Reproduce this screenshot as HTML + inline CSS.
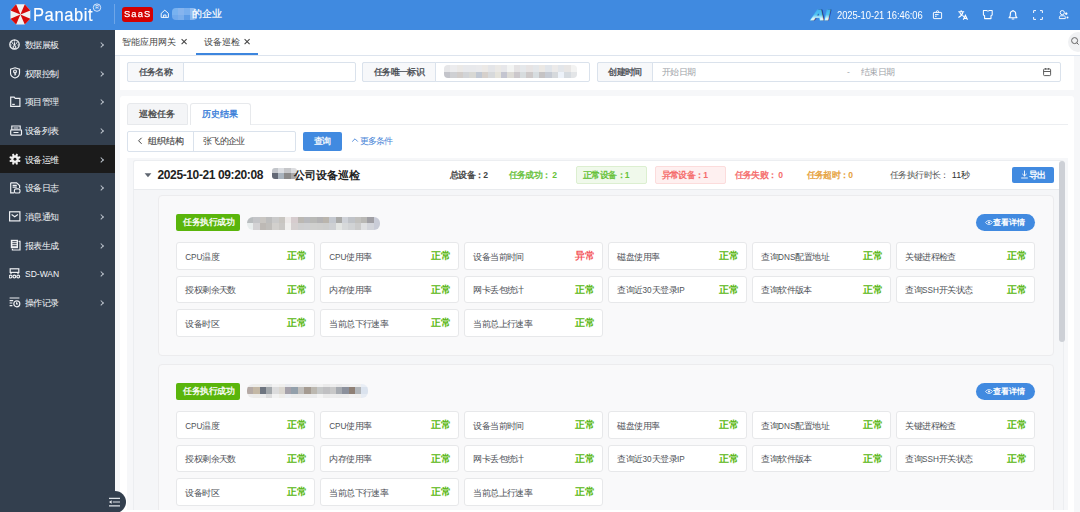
<!DOCTYPE html><html><head><meta charset="utf-8"><style>
*{box-sizing:border-box;margin:0;padding:0}
html,body{width:1080px;height:512px;overflow:hidden;background:#fff;font-family:"Liberation Sans",sans-serif;color:#333}
.a{position:absolute}
.t{position:absolute;white-space:nowrap}
.mi{position:absolute;left:0;width:115px;height:28.7px;color:#f4f6f8;font-size:9px;letter-spacing:-0.75px;font-weight:400;line-height:28.7px}
.mi .tx{position:absolute;left:25px;top:0.9px}
.mi .ch{position:absolute;left:98.5px;top:12.9px;width:4.2px;height:4.2px;border-right:0.9px solid #b9c0c9;border-top:0.9px solid #b9c0c9;transform:rotate(45deg)}
.mi.act{background:#1b1b1b}
.mi svg{position:absolute}
.lbl{position:absolute;background:#f7f8fa;border:1px solid #dae2ec;border-radius:2px 0 0 2px;font-size:9px;letter-spacing:-0.6px;font-weight:400;-webkit-text-stroke-width:0.3px;color:#43474e;text-align:center;line-height:18px}
.inp{position:absolute;background:#fff;border:1px solid #dae2ec;border-radius:2px}
.cell{position:absolute;width:138.8px;height:27.8px;background:#fff;border:1px solid #e7e8ea;border-radius:3px}
.cell .n{position:absolute;left:8px;top:0.6px;line-height:26px;font-size:9px;letter-spacing:-0.55px;color:#4f5359}
.cell .s{position:absolute;right:7.2px;top:0;line-height:25.5px;font-size:9.8px;font-weight:bold;color:#56b60c}
.cell .s.bad{color:#f4585d}
.badge{position:absolute;height:17.5px;background:#5ab50b;color:#fff;font-size:9px;letter-spacing:-0.5px;-webkit-text-stroke-width:0.3px;line-height:17.5px;padding:0 6px 0 7px;border-radius:2px}
.det{position:absolute;width:58.8px;height:16.7px;background:#418ae0;border-radius:9px;color:#fff;font-size:8.4px;font-weight:bold;line-height:16.7px}
</style></head><body>
<div class="a" style="left:0;top:0;width:1080px;height:30px;background:#408ae0"></div>
<svg class="a" style="left:0;top:0" width="34" height="30"><g transform="translate(20.4,14.45)">
<polygon points="-4.3,-10.15 4.4,-10.15 9.9,-4.05 9.9,4.35 4.4,10.15 -4.3,10.15 -9.9,4.35 -9.9,-4.05" fill="#f1f1f1"/>
<polygon points="0,0 -4.3,-10.15 -9.9,-4.05" fill="#d60a0a"/>
<polygon points="0,0 4.4,-10.15 9.9,-4.05" fill="#d60a0a"/>
<polygon points="0,0 9.9,4.35 4.4,10.15" fill="#d60a0a"/>
<polygon points="0,0 -9.9,4.35 -4.3,10.15" fill="#d60a0a"/></g></svg>
<div class="t" style="left:32.5px;top:4px;font-size:18.6px;color:#fff;line-height:22px;letter-spacing:0.65px;transform:scaleX(0.89);-webkit-text-stroke-width:0.15px;transform-origin:0 0">Panabit</div>
<svg class="a" style="left:92px;top:3px" width="10" height="10"><circle cx="5" cy="4.6" r="3.7" fill="none" stroke="#eaf2ff" stroke-width="0.9"/><text x="5" y="6.3" font-size="4.8" fill="#fff" text-anchor="middle" font-family="Liberation Sans">R</text></svg>
<div class="a" style="left:114px;top:4px;width:1px;height:20px;background:#6ea6e8"></div>
<div class="t" style="left:122px;top:7px;width:31px;height:15px;background:#d40000;border-radius:3px"></div>
<div class="t" style="left:124.2px;top:6.3px;color:#fff;font-size:18.6px;line-height:30px;letter-spacing:2.3px;-webkit-text-stroke-width:0.5px;transform:scale(0.5);transform-origin:0 0">SaaS</div>
<svg class="a" style="left:159px;top:8px" width="12" height="12"><path d="M2.2,5.4 L5.8,2.2 L9.4,5.4 L9.4,9.4 L2.2,9.4 Z" fill="none" stroke="#fff" stroke-width="0.95"/><path d="M4.6,9.4 V7 H7 V9.4" fill="none" stroke="#fff" stroke-width="0.9"/></svg>
<div class="a" style="left:172.2px;top:8.3px;width:24.40px;height:11.90px;overflow:hidden;border-radius:4px;filter:blur(0.7px);"><div style="position:absolute;left:0.00px;top:0.00px;width:6.50px;height:7.10px;background:#78b2f0"></div><div style="position:absolute;left:6.10px;top:0.00px;width:6.50px;height:7.10px;background:#86b4ee"></div><div style="position:absolute;left:12.20px;top:0.00px;width:6.50px;height:7.10px;background:#79afee"></div><div style="position:absolute;left:18.30px;top:0.00px;width:6.50px;height:7.10px;background:#92bcf0"></div><div style="position:absolute;left:0.00px;top:6.70px;width:6.50px;height:5.60px;background:#70a9ec"></div><div style="position:absolute;left:6.10px;top:6.70px;width:6.50px;height:5.60px;background:#7aaeec"></div><div style="position:absolute;left:12.20px;top:6.70px;width:6.50px;height:5.60px;background:#5c9be6"></div><div style="position:absolute;left:18.30px;top:6.70px;width:6.50px;height:5.60px;background:#88b7ef"></div></div>
<div class="t" style="left:192px;top:7px;font-size:10px;line-height:14px;color:#fff;-webkit-text-stroke-width:0.2px">的企业</div>
<svg class="a" style="left:808px;top:5px" width="26" height="17"><defs><linearGradient id="aig" x1="0" y1="0" x2="0" y2="1"><stop offset="0" stop-color="#35a6ee"/><stop offset="0.5" stop-color="#52c4f4"/><stop offset="0.75" stop-color="#e8fbff"/><stop offset="1" stop-color="#7fd6f6"/></linearGradient></defs><g transform="translate(3.3,14.6) scale(1.2,1)"><text x="0.7" y="0.6" font-family="Liberation Sans" font-weight="bold" font-style="italic" font-size="15" fill="#1c2f6a" stroke="#1c2f6a" stroke-width="0.9" letter-spacing="0.4">AI</text><text x="0" y="0" font-family="Liberation Sans" font-weight="bold" font-style="italic" font-size="15" fill="url(#aig)" stroke="url(#aig)" stroke-width="0.9" letter-spacing="0.4">AI</text></g></svg>
<div class="t" style="left:836.8px;top:9.1px;font-size:10.4px;line-height:14px;color:#fff;letter-spacing:-0.1px;transform:scaleX(0.905);transform-origin:0 0">2025-10-21 16:46:06</div>
<svg class="a" style="left:930px;top:8px" width="14" height="14"><rect x="3.4" y="4.4" width="8.2" height="6.2" rx="0.6" stroke="#fff" fill="none" stroke-width="0.95"/><path d="M6.4,4.4 V3.2 Q7.5,2.2 8.6,3.2 V4.4" stroke="#fff" fill="none" stroke-width="0.95"/><path d="M5,6.6 H8.6 M5,8.3 H6.6" stroke="#fff" fill="none" stroke-width="0.95"/></svg>
<svg class="a" style="left:956px;top:8px" width="14" height="14"><path d="M2.3,3.7 H8.2 M5.2,2.2 V3.7 M3.6,4.4 C4.4,6.6 5.8,7.8 8.2,8.6 M6.9,4.4 C6.2,7 4.6,8.4 2.4,9.4" stroke="#fff" fill="none" stroke-width="1.15"/><path d="M7.3,11.8 L9.4,7.3 L11.5,11.8 M8.2,10.3 H10.6" stroke="#fff" fill="none" stroke-width="1.15"/></svg>
<svg class="a" style="left:981px;top:8px" width="14" height="14"><path d="M2.4,2.4 H5.6 C6,3.3 7.9,3.3 8.3,2.4 H11.2 V7 L10,7.6 V10.6 H3.6 V7.6 L2.4,7 Z" stroke="#fff" fill="none" stroke-width="1.05" stroke-linejoin="round"/></svg>
<svg class="a" style="left:1006px;top:8px" width="14" height="14"><path d="M3.1,9.7 C3.9,9 4.3,8.4 4.3,7.2 V6 C4.3,4.2 5.4,3 7,3 C8.6,3 9.7,4.2 9.7,6 V7.2 C9.7,8.4 10.1,9 10.9,9.7 Z" stroke="#fff" fill="none" stroke-width="1.15" stroke-linejoin="round"/><path d="M5.7,11 H8.3 M7,2.1 V3" stroke="#fff" stroke-width="1.2"/></svg>
<svg class="a" style="left:1031px;top:8px" width="14" height="14"><path d="M2.6,5 V2.6 H5 M9,2.6 H11.4 V5 M11.4,9 V11.4 H9 M5,11.4 H2.6 V9" stroke="#fff" fill="none" stroke-width="0.95"/></svg>
<svg class="a" style="left:1057px;top:8px" width="14" height="14"><circle cx="5.3" cy="4.6" r="2.1" stroke="#fff" fill="none" stroke-width="0.95"/><path d="M2.4,10.6 V9.3 C2.4,8.3 3,7.8 4,7.8 H6.8 C7.8,7.8 8.3,8.3 8.3,9.3 V10.6 Z" stroke="#fff" fill="none" stroke-width="0.95"/><path d="M9.2,4.3 L10.4,5 V6.3 L9.2,7 L8.1,6.3 V5 Z" fill="#fff"/><circle cx="10.5" cy="9.4" r="1" fill="#fff"/></svg>
<div class="a" style="left:0;top:30px;width:115px;height:482px;background:#333f4e"></div>
<div class="mi" style="top:30.00px"><span class="tx">数据展板</span><i class="ch"></i></div>
<svg class="a" style="left:9px;top:38.7px" width="13" height="13"><circle cx="5.5" cy="5.5" r="4.7" fill="none" stroke="#eef0f3" stroke-width="1.3"/><path d="M5.5,1.2 V2.6 M2.4,2.6 L3.4,3.6 M8.6,2.6 L7.6,3.6 M1.2,6 H2.6 M9.8,6 H8.4 M5.5,3.2 V6.8" stroke="#eef0f3" stroke-width="1.2"/><path d="M3.2,4.2 L4.6,5.4 M7.8,4.2 L6.4,5.4" stroke="#eef0f3" stroke-width="1"/><circle cx="5.5" cy="8.1" r="1.4" fill="#333f4e" stroke="#eef0f3" stroke-width="1.1"/></svg>
<div class="mi" style="top:58.70px"><span class="tx">权限控制</span><i class="ch"></i></div>
<svg class="a" style="left:10px;top:66.6px" width="13" height="13"><path d="M5,0.8 L9.5,2.2 V6 C9.5,8.6 7.6,10.2 5,11 C2.4,10.2 0.5,8.6 0.5,6 V2.2 Z" stroke="#eef0f3" fill="none" stroke-width="1.2"/><circle cx="5" cy="4.4" r="1.4" stroke="#eef0f3" fill="none" stroke-width="1.2"/><path d="M5,5.8 V8.4 M5,7.2 H6.2" stroke="#eef0f3" fill="none" stroke-width="1.2"/></svg>
<div class="mi" style="top:87.40px"><span class="tx">项目管理</span><i class="ch"></i></div>
<svg class="a" style="left:9.5px;top:96px" width="13" height="13"><path d="M0.7,1.2 H4.2 L5.2,2.3 H9.9 V10.3 H0.7 Z" stroke="#eef0f3" fill="none" stroke-width="1.2"/><path d="M2.2,8.4 H4.8" stroke="#eef0f3" fill="none" stroke-width="1.2"/></svg>
<div class="mi" style="top:116.10px"><span class="tx">设备列表</span><i class="ch"></i></div>
<svg class="a" style="left:9.5px;top:124.5px" width="13" height="13"><path d="M1.8,4.8 V1 H10.2 V4" stroke="#eef0f3" fill="none" stroke-width="1.2"/><rect x="0.7" y="4.9" width="10.8" height="5.2" rx="0.8" stroke="#eef0f3" fill="none" stroke-width="1.2"/><path d="M3.5,7.5 H8.5 M3.6,3 H8.4" stroke="#eef0f3" fill="none" stroke-width="1.2"/></svg>
<div class="mi act" style="top:144.80px"><span class="tx">设备运维</span><i class="ch"></i></div>
<svg class="a" style="left:9px;top:152.5px" width="13" height="13"><g transform="translate(6,6.2) scale(0.93)" fill="#f2f2f2"><circle r="3.9"/><path d="M-1.4,-3.5 L-0.8,-6.2 H0.8 L1.4,-3.5 Z" transform="rotate(22.5)"/><path d="M-1.4,-3.5 L-0.8,-6.2 H0.8 L1.4,-3.5 Z" transform="rotate(67.5)"/><path d="M-1.4,-3.5 L-0.8,-6.2 H0.8 L1.4,-3.5 Z" transform="rotate(112.5)"/><path d="M-1.4,-3.5 L-0.8,-6.2 H0.8 L1.4,-3.5 Z" transform="rotate(157.5)"/><path d="M-1.4,-3.5 L-0.8,-6.2 H0.8 L1.4,-3.5 Z" transform="rotate(202.5)"/><path d="M-1.4,-3.5 L-0.8,-6.2 H0.8 L1.4,-3.5 Z" transform="rotate(247.5)"/><path d="M-1.4,-3.5 L-0.8,-6.2 H0.8 L1.4,-3.5 Z" transform="rotate(292.5)"/><path d="M-1.4,-3.5 L-0.8,-6.2 H0.8 L1.4,-3.5 Z" transform="rotate(337.5)"/><circle r="1.6" fill="#1b1b1b"/></g></svg>
<div class="mi" style="top:173.50px"><span class="tx">设备日志</span><i class="ch"></i></div>
<svg class="a" style="left:9.8px;top:181.5px" width="13" height="13"><path d="M0.7,0.8 H6.6 L9.6,3.6 V6" stroke="#eef0f3" fill="none" stroke-width="1.2"/><path d="M0.7,0.8 V10.8 H4" stroke="#eef0f3" fill="none" stroke-width="1.2"/><path d="M2.6,3.4 H6.8 M2.6,5.2 H6.8" stroke="#eef0f3" fill="none" stroke-width="1.2"/><rect x="4.4" y="6.8" width="5.6" height="4.2" rx="1.6" stroke="#eef0f3" fill="none" stroke-width="1.2"/></svg>
<div class="mi" style="top:202.20px"><span class="tx">消息通知</span><i class="ch"></i></div>
<svg class="a" style="left:9px;top:210.5px" width="13" height="13"><rect x="0.6" y="0.8" width="10.3" height="9.1" stroke="#eef0f3" fill="none" stroke-width="1.2"/><path d="M2.6,3.5 L5.75,5.7 L8.9,3.5" stroke="#eef0f3" fill="none" stroke-width="1.2"/></svg>
<div class="mi" style="top:230.90px"><span class="tx">报表生成</span><i class="ch"></i></div>
<svg class="a" style="left:9.8px;top:238.5px" width="13" height="13"><rect x="0.8" y="0.8" width="7.2" height="8.4" fill="#eef0f3"/><path d="M2.4,2.7 H6.6 M2.4,4.7 H6.6 M2.4,6.7 H6.6" stroke="#343e4c" stroke-width="1"/><path d="M8.6,2.4 H10 V11 H2.4 V9.8" stroke="#eef0f3" fill="none" stroke-width="1.2"/></svg>
<div class="mi" style="top:259.60px"><span class="tx"><span style="letter-spacing:0;font-size:8.5px;font-weight:400;-webkit-text-stroke-width:0;position:relative;top:-0.3px">SD-WAN</span></span><i class="ch"></i></div>
<svg class="a" style="left:9.2px;top:267.5px" width="13" height="13"><rect x="1.2" y="0.8" width="8.6" height="3.6" stroke="#eef0f3" fill="none" stroke-width="1.2"/><path d="M2,4.4 V6 M9,4.4 V6" stroke="#eef0f3" fill="none" stroke-width="1.2"/><circle cx="1.6" cy="8.6" r="1.4" stroke="#eef0f3" fill="none" stroke-width="1.2"/><circle cx="5.4" cy="8.6" r="1.4" stroke="#eef0f3" fill="none" stroke-width="1.2"/><circle cx="9.2" cy="8.6" r="1.4" stroke="#eef0f3" fill="none" stroke-width="1.2"/></svg>
<div class="mi" style="top:288.30px"><span class="tx">操作记录</span><i class="ch"></i></div>
<svg class="a" style="left:9.3px;top:296.5px" width="13" height="13"><path d="M0.6,1 H10.4 M0.6,3.6 H4.2 M0.6,6 H3.4 M0.6,8.6 H3.4" stroke="#eef0f3" fill="none" stroke-width="1.2"/><circle cx="7.8" cy="6.8" r="3" stroke="#eef0f3" fill="none" stroke-width="1.2"/><path d="M7.6,5.2 V7 H9" stroke="#eef0f3" fill="none" stroke-width="1.2"/></svg>
<div class="a" style="left:115px;top:30px;width:965px;height:26px;background:#fff;border-bottom:1px solid #dde4ee"></div>
<div class="t" style="left:122px;top:35px;font-size:9px;line-height:14px;color:#444">智能应用网关</div>
<svg class="a" style="left:180px;top:37px" width="8" height="9"><path d="M1.6,2.2 L6.6,7.2 M6.6,2.2 L1.6,7.2" stroke="#444" stroke-width="1.05"/></svg>
<div class="t" style="left:204px;top:35px;font-size:9px;line-height:14px;color:#444">设备巡检</div>
<svg class="a" style="left:243px;top:37px" width="8" height="9"><path d="M1.6,2.2 L6.6,7.2 M6.6,2.2 L1.6,7.2" stroke="#444" stroke-width="1.05"/></svg>
<div class="a" style="left:196px;top:53px;width:62px;height:2px;background:#3d86de"></div>
<div class="a" style="left:1068px;top:31.5px;width:20px;height:20px;border-radius:50%;background:#f0f1f3"></div>
<svg class="a" style="left:1070px;top:36px" width="10" height="10"><circle cx="4.6" cy="4.6" r="3" fill="none" stroke="#666" stroke-width="1"/><path d="M6.8,6.8 L8.6,8.6" stroke="#666" stroke-width="1"/></svg>
<div class="a" style="left:115px;top:56px;width:965px;height:456px;background:#f6f7f9"></div>
<div class="a" style="left:120px;top:56px;width:954px;height:34px;background:#fff"></div>
<div class="inp" style="left:127px;top:62px;width:228.5px;height:20px"></div>
<div class="lbl" style="left:127px;top:62px;width:57px;height:20px">任务名称</div>
<div class="inp" style="left:362px;top:62px;width:228px;height:20px"></div>
<div class="lbl" style="left:362px;top:62px;width:74px;height:20px">任务唯一标识</div>
<div class="a" style="left:444px;top:65px;width:132.93px;height:13.20px;overflow:hidden;border-radius:4px;filter:blur(0.6px);"><div style="position:absolute;left:0.00px;top:0.00px;width:6.73px;height:7.20px;background:#e6e6e8"></div><div style="position:absolute;left:6.33px;top:0.00px;width:6.73px;height:7.20px;background:#ececee"></div><div style="position:absolute;left:12.66px;top:0.00px;width:6.73px;height:7.20px;background:#ebe9e7"></div><div style="position:absolute;left:18.99px;top:0.00px;width:6.73px;height:7.20px;background:#e8e9ec"></div><div style="position:absolute;left:25.32px;top:0.00px;width:6.73px;height:7.20px;background:#e8e9ec"></div><div style="position:absolute;left:31.65px;top:0.00px;width:6.73px;height:7.20px;background:#eaeaec"></div><div style="position:absolute;left:37.98px;top:0.00px;width:6.73px;height:7.20px;background:#ece9e6"></div><div style="position:absolute;left:44.31px;top:0.00px;width:6.73px;height:7.20px;background:#e4e5e8"></div><div style="position:absolute;left:50.64px;top:0.00px;width:6.73px;height:7.20px;background:#ebe9e6"></div><div style="position:absolute;left:56.97px;top:0.00px;width:6.73px;height:7.20px;background:#e7e7ea"></div><div style="position:absolute;left:63.30px;top:0.00px;width:6.73px;height:7.20px;background:#f3f4f3"></div><div style="position:absolute;left:69.63px;top:0.00px;width:6.73px;height:7.20px;background:#e5e3e4"></div><div style="position:absolute;left:75.96px;top:0.00px;width:6.73px;height:7.20px;background:#e5e8eb"></div><div style="position:absolute;left:82.29px;top:0.00px;width:6.73px;height:7.20px;background:#e7e4e4"></div><div style="position:absolute;left:88.62px;top:0.00px;width:6.73px;height:7.20px;background:#e4e7ea"></div><div style="position:absolute;left:94.95px;top:0.00px;width:6.73px;height:7.20px;background:#ebe8e4"></div><div style="position:absolute;left:101.28px;top:0.00px;width:6.73px;height:7.20px;background:#e1e5ea"></div><div style="position:absolute;left:107.61px;top:0.00px;width:6.73px;height:7.20px;background:#eceae9"></div><div style="position:absolute;left:113.94px;top:0.00px;width:6.73px;height:7.20px;background:#e3e6ea"></div><div style="position:absolute;left:120.27px;top:0.00px;width:6.73px;height:7.20px;background:#e8e6e5"></div><div style="position:absolute;left:126.60px;top:0.00px;width:6.73px;height:7.20px;background:#f3f3f2"></div><div style="position:absolute;left:0.00px;top:6.80px;width:6.73px;height:6.80px;background:#c3c4ca"></div><div style="position:absolute;left:6.33px;top:6.80px;width:6.73px;height:6.80px;background:#cfd0d3"></div><div style="position:absolute;left:12.66px;top:6.80px;width:6.73px;height:6.80px;background:#d2cdca"></div><div style="position:absolute;left:18.99px;top:6.80px;width:6.73px;height:6.80px;background:#d2d4d7"></div><div style="position:absolute;left:25.32px;top:6.80px;width:6.73px;height:6.80px;background:#d8d8d4"></div><div style="position:absolute;left:31.65px;top:6.80px;width:6.73px;height:6.80px;background:#c1c8d3"></div><div style="position:absolute;left:37.98px;top:6.80px;width:6.73px;height:6.80px;background:#d6d0cb"></div><div style="position:absolute;left:44.31px;top:6.80px;width:6.73px;height:6.80px;background:#d7d9db"></div><div style="position:absolute;left:50.64px;top:6.80px;width:6.73px;height:6.80px;background:#e5e3db"></div><div style="position:absolute;left:56.97px;top:6.80px;width:6.73px;height:6.80px;background:#c4c5d0"></div><div style="position:absolute;left:63.30px;top:6.80px;width:6.73px;height:6.80px;background:#dddbd6"></div><div style="position:absolute;left:69.63px;top:6.80px;width:6.73px;height:6.80px;background:#ccc8cc"></div><div style="position:absolute;left:75.96px;top:6.80px;width:6.73px;height:6.80px;background:#d7dcde"></div><div style="position:absolute;left:82.29px;top:6.80px;width:6.73px;height:6.80px;background:#cdc9c9"></div><div style="position:absolute;left:88.62px;top:6.80px;width:6.73px;height:6.80px;background:#d7dde0"></div><div style="position:absolute;left:94.95px;top:6.80px;width:6.73px;height:6.80px;background:#c5c3c4"></div><div style="position:absolute;left:101.28px;top:6.80px;width:6.73px;height:6.80px;background:#c6cbd4"></div><div style="position:absolute;left:107.61px;top:6.80px;width:6.73px;height:6.80px;background:#d6d9dc"></div><div style="position:absolute;left:113.94px;top:6.80px;width:6.73px;height:6.80px;background:#edf2f9"></div><div style="position:absolute;left:120.27px;top:6.80px;width:6.73px;height:6.80px;background:#d6dbe0"></div><div style="position:absolute;left:126.60px;top:6.80px;width:6.73px;height:6.80px;background:#e3e5e7"></div></div>
<div class="inp" style="left:597px;top:62px;width:463.5px;height:20px"></div>
<div class="lbl" style="left:597px;top:62px;width:56px;height:20px">创建时间</div>
<div class="t" style="left:662px;top:65px;font-size:9px;letter-spacing:-0.6px;line-height:14px;color:#a0a3a9">开始日期</div>
<div class="t" style="left:847px;top:65px;font-size:8.4px;line-height:14px;color:#a8abb2">-</div>
<div class="t" style="left:861px;top:65px;font-size:9px;letter-spacing:-0.6px;line-height:14px;color:#a0a3a9">结束日期</div>
<svg class="a" style="left:1042px;top:67px" width="10" height="10"><rect x="1.6" y="2" width="7" height="6.6" rx="0.8" fill="none" stroke="#555" stroke-width="0.95"/><path d="M1.6,4.5 H8.6 M3.6,1 V2.6 M6.6,1 V2.6" stroke="#555" stroke-width="0.95"/></svg>
<div class="a" style="left:120px;top:96px;width:954px;height:416px;background:#fff;border-radius:3px 3px 0 0"></div>
<div class="a" style="left:250px;top:123.5px;width:817.5px;height:1px;background:#eceef1"></div>
<div class="a" style="left:127px;top:103px;width:60.5px;height:21.5px;background:#f4f5f7;border:1px solid #e7e9ec;border-radius:3px 3px 0 0"></div>
<div class="t" style="left:139px;top:106.5px;font-size:9px;line-height:14px;color:#4a4a4a;font-weight:400;-webkit-text-stroke-width:0.35px">巡检任务</div>
<div class="a" style="left:190px;top:103px;width:60.5px;height:22px;background:#fff;border:1px solid #e7e9ec;border-bottom:none;border-radius:3px 3px 0 0"></div>
<div class="t" style="left:202px;top:106.5px;font-size:9px;line-height:14px;color:#3b7fd9;font-weight:400;-webkit-text-stroke-width:0.35px">历史结果</div>
<div class="inp" style="left:127px;top:131px;width:169px;height:20.5px"></div>
<div class="a" style="left:193px;top:131px;width:1px;height:20.5px;background:#dae2ec"></div>
<svg class="a" style="left:136px;top:136px" width="8" height="10"><path d="M5.6,1.8 L2.6,4.8 L5.6,7.8" fill="none" stroke="#444" stroke-width="1"/></svg>
<div class="t" style="left:148px;top:134px;font-size:9px;letter-spacing:-0.1px;-webkit-text-stroke-width:0.15px;line-height:14px;color:#444">组织结构</div>
<div class="t" style="left:203px;top:134px;font-size:9px;letter-spacing:-0.7px;line-height:14px;color:#444">张飞的企业</div>
<div class="a" style="left:303px;top:131.5px;width:39px;height:19.7px;background:#418ae0;border-radius:2px;color:#fff;font-size:9px;letter-spacing:-0.4px;-webkit-text-stroke-width:0.25px;line-height:19.7px;text-align:center">查询</div>
<svg class="a" style="left:351px;top:137px" width="8" height="6"><path d="M1.2,4.6 L4,1.8 L6.8,4.6" fill="none" stroke="#4a86d8" stroke-width="0.9"/></svg>
<div class="t" style="left:359.5px;top:134px;font-size:9px;letter-spacing:-0.7px;line-height:14px;color:#4a86d8">更多条件</div>
<div class="a" style="left:127px;top:157.5px;width:940.5px;height:352px;background:#f6f7f9"></div>
<div class="a" style="left:133px;top:160.3px;width:930.8px;height:349.3px;background:#f5f6f8;border:1px solid #eceef1;border-bottom:none;border-radius:3px 3px 0 0"></div>
<div class="a" style="left:133px;top:160.3px;width:930.8px;height:29.6px;background:#fff;border:1px solid #eceef1;border-bottom:1px solid #e9ebee;border-radius:3px 3px 0 0"></div>
<svg class="a" style="left:143px;top:171px" width="10" height="8"><path d="M1.6,2.2 H8.4 L5,6.2 Z" fill="#5f6670"/></svg>
<div class="t" style="left:157.5px;top:167px;font-size:12px;line-height:16px;font-weight:bold;color:#222;letter-spacing:-0.38px">2025-10-21 09:20:08</div>
<div class="a" style="left:271.9px;top:167.7px;width:25.20px;height:11.40px;overflow:hidden;border-radius:3px;filter:blur(0.6px);"><div style="position:absolute;left:0.00px;top:0.00px;width:6.70px;height:5.50px;background:#c3c6cb"></div><div style="position:absolute;left:6.30px;top:0.00px;width:6.70px;height:5.50px;background:#dcdee2"></div><div style="position:absolute;left:12.60px;top:0.00px;width:6.70px;height:5.50px;background:#c6c7ca"></div><div style="position:absolute;left:18.90px;top:0.00px;width:6.70px;height:5.50px;background:#dcdde0"></div><div style="position:absolute;left:0.00px;top:5.10px;width:6.70px;height:6.70px;background:#626875"></div><div style="position:absolute;left:6.30px;top:5.10px;width:6.70px;height:6.70px;background:#a9b3bd"></div><div style="position:absolute;left:12.60px;top:5.10px;width:6.70px;height:6.70px;background:#8b8a8a"></div><div style="position:absolute;left:18.90px;top:5.10px;width:6.70px;height:6.70px;background:#a8a8aa"></div></div>
<div class="t" style="left:294px;top:166.5px;font-size:11px;line-height:16px;font-weight:bold;color:#222">公司设备巡检</div>
<div class="t" style="left:450px;top:167.5px;font-size:9px;letter-spacing:-0.6px;-webkit-text-stroke-width:0.35px;line-height:14px;color:#444">总设备：<span style="letter-spacing:0;font-size:8.6px;font-weight:bold;-webkit-text-stroke-width:0;margin-left:-0.30000000000000004px">2</span></div>
<div class="t" style="left:508.5px;top:167.5px;font-size:9px;letter-spacing:-0.6px;-webkit-text-stroke-width:0.35px;line-height:14px;color:#67c23a">任务成功：<span style="letter-spacing:0;font-size:8.6px;font-weight:bold;-webkit-text-stroke-width:0;margin-left:1.7000000000000002px">2</span></div>
<div class="a" style="left:576px;top:166px;width:71px;height:17.5px;background:#f0f9eb;border:1px solid #dcefd0;border-radius:2px"></div>
<div class="t" style="left:583px;top:167.5px;font-size:9px;letter-spacing:-0.6px;-webkit-text-stroke-width:0.35px;line-height:14px;color:#67c23a">正常设备：<span style="letter-spacing:0;font-size:8.6px;font-weight:bold;-webkit-text-stroke-width:0;margin-left:-0.30000000000000004px">1</span></div>
<div class="a" style="left:655px;top:166px;width:71px;height:17.5px;background:#fef0f0;border:1px solid #fcdcdc;border-radius:2px"></div>
<div class="t" style="left:661.5px;top:167.5px;font-size:9px;letter-spacing:-0.6px;-webkit-text-stroke-width:0.35px;line-height:14px;color:#f56c6c">异常设备：<span style="letter-spacing:0;font-size:8.6px;font-weight:bold;-webkit-text-stroke-width:0;margin-left:-0.30000000000000004px">1</span></div>
<div class="t" style="left:734.5px;top:167.5px;font-size:9px;letter-spacing:-0.6px;-webkit-text-stroke-width:0.35px;line-height:14px;color:#f56c6c">任务失败：<span style="letter-spacing:0;font-size:8.6px;font-weight:bold;-webkit-text-stroke-width:0;margin-left:1.7000000000000002px">0</span></div>
<div class="t" style="left:806.5px;top:167.5px;font-size:9px;letter-spacing:-0.6px;-webkit-text-stroke-width:0.35px;line-height:14px;color:#e6a23c">任务超时：<span style="letter-spacing:0;font-size:8.6px;font-weight:bold;-webkit-text-stroke-width:0;margin-left:-0.30000000000000004px">0</span></div>
<div class="t" style="left:890px;top:167.5px;font-size:9px;letter-spacing:-0.6px;line-height:14px;color:#555">任务执行时长：<span style="color:#333;letter-spacing:0;margin-left:3px">11</span><span style="color:#333">秒</span></div>
<div class="a" style="left:1012px;top:166.7px;width:42px;height:16.5px;background:#418ae0;border-radius:2px"></div>
<svg class="a" style="left:1020px;top:169px" width="9" height="11"><path d="M4.5,1.5 V7 M2.3,4.9 L4.5,7 L6.7,4.9 M1.2,9 H7.8" fill="none" stroke="#fff" stroke-width="0.9"/></svg>
<div class="t" style="left:1028.5px;top:167.5px;font-size:9px;letter-spacing:-0.5px;-webkit-text-stroke-width:0.3px;line-height:14px;color:#fff">导出</div>
<div class="a" style="left:1059px;top:161px;width:6.3px;height:180.5px;background:#cdd0d6;border-radius:3px"></div>
<div class="a" style="left:157.5px;top:195px;width:896px;height:160.5px;background:#f9f9fa;border:1px solid #ececee;border-radius:4px"></div>
<div class="badge" style="left:176px;top:213.8px">任务执行成功</div>
<div class="a" style="left:247px;top:216.6px;width:132.93px;height:13.20px;overflow:hidden;border-radius:6px;filter:blur(0.6px);"><div style="position:absolute;left:0.00px;top:0.00px;width:6.73px;height:7.30px;background:#b9bdbf"></div><div style="position:absolute;left:6.33px;top:0.00px;width:6.73px;height:7.30px;background:#c4c5c8"></div><div style="position:absolute;left:12.66px;top:0.00px;width:6.73px;height:7.30px;background:#c9c6c2"></div><div style="position:absolute;left:18.99px;top:0.00px;width:6.73px;height:7.30px;background:#bdbdbd"></div><div style="position:absolute;left:25.32px;top:0.00px;width:6.73px;height:7.30px;background:#cacaca"></div><div style="position:absolute;left:31.65px;top:0.00px;width:6.73px;height:7.30px;background:#c8c5c0"></div><div style="position:absolute;left:37.98px;top:0.00px;width:6.73px;height:7.30px;background:#ede9e8"></div><div style="position:absolute;left:44.31px;top:0.00px;width:6.73px;height:7.30px;background:#d6ccce"></div><div style="position:absolute;left:50.64px;top:0.00px;width:6.73px;height:7.30px;background:#bbb8b3"></div><div style="position:absolute;left:56.97px;top:0.00px;width:6.73px;height:7.30px;background:#b8b9bd"></div><div style="position:absolute;left:63.30px;top:0.00px;width:6.73px;height:7.30px;background:#b9b9b6"></div><div style="position:absolute;left:69.63px;top:0.00px;width:6.73px;height:7.30px;background:#b3b2b3"></div><div style="position:absolute;left:75.96px;top:0.00px;width:6.73px;height:7.30px;background:#bab5ad"></div><div style="position:absolute;left:82.29px;top:0.00px;width:6.73px;height:7.30px;background:#c4c8cf"></div><div style="position:absolute;left:88.62px;top:0.00px;width:6.73px;height:7.30px;background:#aaaaa8"></div><div style="position:absolute;left:94.95px;top:0.00px;width:6.73px;height:7.30px;background:#cfd2d8"></div><div style="position:absolute;left:101.28px;top:0.00px;width:6.73px;height:7.30px;background:#c0c3c8"></div><div style="position:absolute;left:107.61px;top:0.00px;width:6.73px;height:7.30px;background:#c2c1be"></div><div style="position:absolute;left:113.94px;top:0.00px;width:6.73px;height:7.30px;background:#b9b8b5"></div><div style="position:absolute;left:120.27px;top:0.00px;width:6.73px;height:7.30px;background:#a09fa4"></div><div style="position:absolute;left:126.60px;top:0.00px;width:6.73px;height:7.30px;background:#c9ccd7"></div><div style="position:absolute;left:0.00px;top:6.90px;width:6.73px;height:6.70px;background:#e9eeee"></div><div style="position:absolute;left:6.33px;top:6.90px;width:6.73px;height:6.70px;background:#d3d2d4"></div><div style="position:absolute;left:12.66px;top:6.90px;width:6.73px;height:6.70px;background:#bdb9b5"></div><div style="position:absolute;left:18.99px;top:6.90px;width:6.73px;height:6.70px;background:#c0bebb"></div><div style="position:absolute;left:25.32px;top:6.90px;width:6.73px;height:6.70px;background:#d2d0cd"></div><div style="position:absolute;left:31.65px;top:6.90px;width:6.73px;height:6.70px;background:#cac8c5"></div><div style="position:absolute;left:37.98px;top:6.90px;width:6.73px;height:6.70px;background:#f1f0ee"></div><div style="position:absolute;left:44.31px;top:6.90px;width:6.73px;height:6.70px;background:#d5d0d0"></div><div style="position:absolute;left:50.64px;top:6.90px;width:6.73px;height:6.70px;background:#cfcfd0"></div><div style="position:absolute;left:56.97px;top:6.90px;width:6.73px;height:6.70px;background:#cfd0d2"></div><div style="position:absolute;left:63.30px;top:6.90px;width:6.73px;height:6.70px;background:#d0d0ce"></div><div style="position:absolute;left:69.63px;top:6.90px;width:6.73px;height:6.70px;background:#cfcfcd"></div><div style="position:absolute;left:75.96px;top:6.90px;width:6.73px;height:6.70px;background:#cdcecd"></div><div style="position:absolute;left:82.29px;top:6.90px;width:6.73px;height:6.70px;background:#ced0d3"></div><div style="position:absolute;left:88.62px;top:6.90px;width:6.73px;height:6.70px;background:#e3e5e3"></div><div style="position:absolute;left:94.95px;top:6.90px;width:6.73px;height:6.70px;background:#d7d9da"></div><div style="position:absolute;left:101.28px;top:6.90px;width:6.73px;height:6.70px;background:#d1d3d5"></div><div style="position:absolute;left:107.61px;top:6.90px;width:6.73px;height:6.70px;background:#cbcbcb"></div><div style="position:absolute;left:113.94px;top:6.90px;width:6.73px;height:6.70px;background:#dfe0e2"></div><div style="position:absolute;left:120.27px;top:6.90px;width:6.73px;height:6.70px;background:#d3d5db"></div><div style="position:absolute;left:126.60px;top:6.90px;width:6.73px;height:6.70px;background:#c9ccd7"></div></div>
<div class="det" style="left:976.2px;top:214.4px"><svg style="position:absolute;left:8.5px;top:5px" width="8" height="7"><path d="M0.6,3.5 C2,1 6,1 7.4,3.5 C6,6 2,6 0.6,3.5 Z" fill="none" stroke="#fff" stroke-width="0.8"/><circle cx="4" cy="3.5" r="1" fill="#fff"/></svg><span style="position:absolute;left:17px;top:0">查看详情</span></div>
<div class="cell" style="left:176.20px;top:242.20px"><span class="n"><span style="letter-spacing:0;font-size:8.2px">CPU</span>温度</span><span class="s">正常</span></div>
<div class="cell" style="left:320.20px;top:242.20px"><span class="n"><span style="letter-spacing:0;font-size:8.2px">CPU</span>使用率</span><span class="s">正常</span></div>
<div class="cell" style="left:464.20px;top:242.20px"><span class="n">设备当前时间</span><span class="s bad">异常</span></div>
<div class="cell" style="left:608.20px;top:242.20px"><span class="n">磁盘使用率</span><span class="s">正常</span></div>
<div class="cell" style="left:752.20px;top:242.20px"><span class="n">查询<span style="letter-spacing:0;font-size:8.2px">DNS</span>配置地址</span><span class="s">正常</span></div>
<div class="cell" style="left:896.20px;top:242.20px"><span class="n">关键进程检查</span><span class="s">正常</span></div>
<div class="cell" style="left:176.20px;top:275.70px"><span class="n">授权剩余天数</span><span class="s">正常</span></div>
<div class="cell" style="left:320.20px;top:275.70px"><span class="n">内存使用率</span><span class="s">正常</span></div>
<div class="cell" style="left:464.20px;top:275.70px"><span class="n">网卡丢包统计</span><span class="s">正常</span></div>
<div class="cell" style="left:608.20px;top:275.70px"><span class="n">查询近<span style="letter-spacing:0;font-size:8.2px">30</span>天登录<span style="letter-spacing:0;font-size:8.2px">IP</span></span><span class="s">正常</span></div>
<div class="cell" style="left:752.20px;top:275.70px"><span class="n">查询软件版本</span><span class="s">正常</span></div>
<div class="cell" style="left:896.20px;top:275.70px"><span class="n">查询<span style="letter-spacing:0;font-size:8.2px">SSH</span>开关状态</span><span class="s">正常</span></div>
<div class="cell" style="left:176.20px;top:309.20px"><span class="n">设备时区</span><span class="s">正常</span></div>
<div class="cell" style="left:320.20px;top:309.20px"><span class="n">当前总下行速率</span><span class="s">正常</span></div>
<div class="cell" style="left:464.20px;top:309.20px"><span class="n">当前总上行速率</span><span class="s">正常</span></div>
<div class="a" style="left:157.5px;top:364.0px;width:896px;height:160.5px;background:#f9f9fa;border:1px solid #ececee;border-radius:4px"></div>
<div class="badge" style="left:176px;top:382.8px">任务执行成功</div>
<div class="a" style="left:247px;top:384.4px;width:120.65px;height:13.90px;overflow:hidden;border-radius:6px;filter:blur(0.6px);"><div style="position:absolute;left:0.00px;top:0.00px;width:6.75px;height:3.50px;background:#ececec"></div><div style="position:absolute;left:6.35px;top:0.00px;width:6.75px;height:3.50px;background:#eeedea"></div><div style="position:absolute;left:12.70px;top:0.00px;width:6.75px;height:3.50px;background:#ecebeb"></div><div style="position:absolute;left:19.05px;top:0.00px;width:6.75px;height:3.50px;background:#e6e7e8"></div><div style="position:absolute;left:25.40px;top:0.00px;width:6.75px;height:3.50px;background:#f2f2f2"></div><div style="position:absolute;left:31.75px;top:0.00px;width:6.75px;height:3.50px;background:#f0efed"></div><div style="position:absolute;left:38.10px;top:0.00px;width:6.75px;height:3.50px;background:#e9ebef"></div><div style="position:absolute;left:44.45px;top:0.00px;width:6.75px;height:3.50px;background:#eeeeee"></div><div style="position:absolute;left:50.80px;top:0.00px;width:6.75px;height:3.50px;background:#efefef"></div><div style="position:absolute;left:57.15px;top:0.00px;width:6.75px;height:3.50px;background:#f0f0f0"></div><div style="position:absolute;left:63.50px;top:0.00px;width:6.75px;height:3.50px;background:#eeeeee"></div><div style="position:absolute;left:69.85px;top:0.00px;width:6.75px;height:3.50px;background:#f2f2f2"></div><div style="position:absolute;left:76.20px;top:0.00px;width:6.75px;height:3.50px;background:#ebebeb"></div><div style="position:absolute;left:82.55px;top:0.00px;width:6.75px;height:3.50px;background:#eeeeee"></div><div style="position:absolute;left:88.90px;top:0.00px;width:6.75px;height:3.50px;background:#eaeaeb"></div><div style="position:absolute;left:95.25px;top:0.00px;width:6.75px;height:3.50px;background:#eeeeef"></div><div style="position:absolute;left:101.60px;top:0.00px;width:6.75px;height:3.50px;background:#f1f1f1"></div><div style="position:absolute;left:107.95px;top:0.00px;width:6.75px;height:3.50px;background:#f0f0f0"></div><div style="position:absolute;left:114.30px;top:0.00px;width:6.75px;height:3.50px;background:#e9eef5"></div><div style="position:absolute;left:0.00px;top:3.10px;width:6.75px;height:6.70px;background:#b5aaa5"></div><div style="position:absolute;left:6.35px;top:3.10px;width:6.75px;height:6.70px;background:#c4b8a5"></div><div style="position:absolute;left:12.70px;top:3.10px;width:6.75px;height:6.70px;background:#6e7580"></div><div style="position:absolute;left:19.05px;top:3.10px;width:6.75px;height:6.70px;background:#a2a7ab"></div><div style="position:absolute;left:25.40px;top:3.10px;width:6.75px;height:6.70px;background:#dcdcdd"></div><div style="position:absolute;left:31.75px;top:3.10px;width:6.75px;height:6.70px;background:#dbd7d0"></div><div style="position:absolute;left:38.10px;top:3.10px;width:6.75px;height:6.70px;background:#a5a1aa"></div><div style="position:absolute;left:44.45px;top:3.10px;width:6.75px;height:6.70px;background:#93a0ab"></div><div style="position:absolute;left:50.80px;top:3.10px;width:6.75px;height:6.70px;background:#c1bfbc"></div><div style="position:absolute;left:57.15px;top:3.10px;width:6.75px;height:6.70px;background:#a59b91"></div><div style="position:absolute;left:63.50px;top:3.10px;width:6.75px;height:6.70px;background:#bcb8b0"></div><div style="position:absolute;left:69.85px;top:3.10px;width:6.75px;height:6.70px;background:#c6c8c8"></div><div style="position:absolute;left:76.20px;top:3.10px;width:6.75px;height:6.70px;background:#c0c0c2"></div><div style="position:absolute;left:82.55px;top:3.10px;width:6.75px;height:6.70px;background:#c8c8c8"></div><div style="position:absolute;left:88.90px;top:3.10px;width:6.75px;height:6.70px;background:#a6aab0"></div><div style="position:absolute;left:95.25px;top:3.10px;width:6.75px;height:6.70px;background:#8c919c"></div><div style="position:absolute;left:101.60px;top:3.10px;width:6.75px;height:6.70px;background:#8f8075"></div><div style="position:absolute;left:107.95px;top:3.10px;width:6.75px;height:6.70px;background:#b2b6ba"></div><div style="position:absolute;left:114.30px;top:3.10px;width:6.75px;height:6.70px;background:#dbe3ee"></div><div style="position:absolute;left:0.00px;top:9.40px;width:6.75px;height:4.90px;background:#ececec"></div><div style="position:absolute;left:6.35px;top:9.40px;width:6.75px;height:4.90px;background:#ecebe9"></div><div style="position:absolute;left:12.70px;top:9.40px;width:6.75px;height:4.90px;background:#ebebec"></div><div style="position:absolute;left:19.05px;top:9.40px;width:6.75px;height:4.90px;background:#dcdcdd"></div><div style="position:absolute;left:25.40px;top:9.40px;width:6.75px;height:4.90px;background:#f2f2f2"></div><div style="position:absolute;left:31.75px;top:9.40px;width:6.75px;height:4.90px;background:#eeedea"></div><div style="position:absolute;left:38.10px;top:9.40px;width:6.75px;height:4.90px;background:#eceff2"></div><div style="position:absolute;left:44.45px;top:9.40px;width:6.75px;height:4.90px;background:#ebebeb"></div><div style="position:absolute;left:50.80px;top:9.40px;width:6.75px;height:4.90px;background:#ebebeb"></div><div style="position:absolute;left:57.15px;top:9.40px;width:6.75px;height:4.90px;background:#ececec"></div><div style="position:absolute;left:63.50px;top:9.40px;width:6.75px;height:4.90px;background:#ebeced"></div><div style="position:absolute;left:69.85px;top:9.40px;width:6.75px;height:4.90px;background:#f4f4f4"></div><div style="position:absolute;left:76.20px;top:9.40px;width:6.75px;height:4.90px;background:#ebebeb"></div><div style="position:absolute;left:82.55px;top:9.40px;width:6.75px;height:4.90px;background:#ececec"></div><div style="position:absolute;left:88.90px;top:9.40px;width:6.75px;height:4.90px;background:#ebebeb"></div><div style="position:absolute;left:95.25px;top:9.40px;width:6.75px;height:4.90px;background:#ececec"></div><div style="position:absolute;left:101.60px;top:9.40px;width:6.75px;height:4.90px;background:#f1f1f1"></div><div style="position:absolute;left:107.95px;top:9.40px;width:6.75px;height:4.90px;background:#f0efee"></div><div style="position:absolute;left:114.30px;top:9.40px;width:6.75px;height:4.90px;background:#e7ecf3"></div></div>
<div class="det" style="left:976.2px;top:383.4px"><svg style="position:absolute;left:8.5px;top:5px" width="8" height="7"><path d="M0.6,3.5 C2,1 6,1 7.4,3.5 C6,6 2,6 0.6,3.5 Z" fill="none" stroke="#fff" stroke-width="0.8"/><circle cx="4" cy="3.5" r="1" fill="#fff"/></svg><span style="position:absolute;left:17px;top:0">查看详情</span></div>
<div class="cell" style="left:176.20px;top:411.20px"><span class="n"><span style="letter-spacing:0;font-size:8.2px">CPU</span>温度</span><span class="s">正常</span></div>
<div class="cell" style="left:320.20px;top:411.20px"><span class="n"><span style="letter-spacing:0;font-size:8.2px">CPU</span>使用率</span><span class="s">正常</span></div>
<div class="cell" style="left:464.20px;top:411.20px"><span class="n">设备当前时间</span><span class="s">正常</span></div>
<div class="cell" style="left:608.20px;top:411.20px"><span class="n">磁盘使用率</span><span class="s">正常</span></div>
<div class="cell" style="left:752.20px;top:411.20px"><span class="n">查询<span style="letter-spacing:0;font-size:8.2px">DNS</span>配置地址</span><span class="s">正常</span></div>
<div class="cell" style="left:896.20px;top:411.20px"><span class="n">关键进程检查</span><span class="s">正常</span></div>
<div class="cell" style="left:176.20px;top:444.70px"><span class="n">授权剩余天数</span><span class="s">正常</span></div>
<div class="cell" style="left:320.20px;top:444.70px"><span class="n">内存使用率</span><span class="s">正常</span></div>
<div class="cell" style="left:464.20px;top:444.70px"><span class="n">网卡丢包统计</span><span class="s">正常</span></div>
<div class="cell" style="left:608.20px;top:444.70px"><span class="n">查询近<span style="letter-spacing:0;font-size:8.2px">30</span>天登录<span style="letter-spacing:0;font-size:8.2px">IP</span></span><span class="s">正常</span></div>
<div class="cell" style="left:752.20px;top:444.70px"><span class="n">查询软件版本</span><span class="s">正常</span></div>
<div class="cell" style="left:896.20px;top:444.70px"><span class="n">查询<span style="letter-spacing:0;font-size:8.2px">SSH</span>开关状态</span><span class="s">正常</span></div>
<div class="cell" style="left:176.20px;top:478.20px"><span class="n">设备时区</span><span class="s">正常</span></div>
<div class="cell" style="left:320.20px;top:478.20px"><span class="n">当前总下行速率</span><span class="s">正常</span></div>
<div class="cell" style="left:464.20px;top:478.20px"><span class="n">当前总上行速率</span><span class="s">正常</span></div>
<div class="a" style="left:120px;top:509.7px;width:954px;height:3px;background:#fff"></div>
<div class="a" style="left:104px;top:490.5px;width:22px;height:22px;border-radius:50%;background:#333f4e"></div>
<svg class="a" style="left:108px;top:496px" width="14" height="12"><path d="M1,2.4 H12 M4.8,6 H12 M1,9.9 H12" stroke="#dfe3e8" stroke-width="1.1"/><path d="M1,6 L3.6,4.2 V7.8 Z" fill="#eef0f3"/></svg>
</body></html>
